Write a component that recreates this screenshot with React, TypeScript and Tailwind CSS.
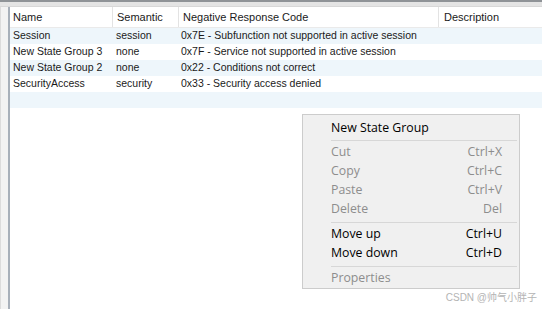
const rows = [
  { name: "Session", semantic: "session", code: "0x7E - Subfunction not supported in active session" },
  { name: "New State Group 3", semantic: "none", code: "0x7F - Service not supported in active session" },
  { name: "New State Group 2", semantic: "none", code: "0x22 - Conditions not correct" },
  { name: "SecurityAccess", semantic: "security", code: "0x33 - Security access denied" },
  { name: "", semantic: "", code: "" },
];

type MenuItem = { label: string; shortcut?: string; disabled?: boolean; sep?: boolean };

const menu: MenuItem[] = [
  { label: "New State Group" },
  { label: "", sep: true },
  { label: "Cut", shortcut: "Ctrl+X", disabled: true },
  { label: "Copy", shortcut: "Ctrl+C", disabled: true },
  { label: "Paste", shortcut: "Ctrl+V", disabled: true },
  { label: "Delete", shortcut: "Del", disabled: true },
  { label: "", sep: true },
  { label: "Move up", shortcut: "Ctrl+U" },
  { label: "Move down", shortcut: "Ctrl+D" },
  { label: "", sep: true },
  { label: "Properties", disabled: true },
];

const App = () => {
  return (
    <div className="relative w-[542px] h-[309px] overflow-hidden bg-white flex flex-col font-['Liberation_Sans',Arial,sans-serif] text-[10.5px] text-[#1a1a1a]">
      <div className="h-[2px] bg-[#8f9397]" />
      <div className="h-[5px] bg-[#e4e4e4] border-b border-[#d8d8d8]" />
      <div className="flex flex-1">
        <div className="w-[8px] bg-[#f3f3f3] border-l border-[#dcdcdc]" />
        <div className="flex-1 border-l-2 border-[#a8b0ba] flex flex-col">
          <div className="flex h-[21px] items-center border-b border-[#eaeaea] text-[11px]">
            <div className="w-[102px] pl-[3px]">Name</div>
            <div className="w-[66px] h-full flex items-center pl-[4px] border-l border-[#e3e3e3]">Semantic</div>
            <div className="w-[260px] h-full flex items-center pl-[4px] border-l border-[#e3e3e3]">Negative Response Code</div>
            <div className="flex-1 h-full flex items-center pl-[5px] border-l border-[#e3e3e3]">Description</div>
          </div>
          {rows.map((r, i) => (
            <div
              key={i}
              className={`flex h-[16px] items-center ${i % 2 === 0 ? "bg-[#eef6fb]" : "bg-white"}`}
            >
              <div className="w-[103px] pl-[3px]">{r.name}</div>
              <div className="w-[66px] pl-[3px]">{r.semantic}</div>
              <div className="flex-1 pl-[2px]">{r.code}</div>
            </div>
          ))}
        </div>
      </div>

      <div className="absolute left-[302px] top-[114px] w-[218px] h-[175px] bg-[#f0f0f0] border border-[#cccccc] pt-[4px] font-['Open_Sans','Noto_Sans',sans-serif] text-[12.3px]">
        {menu.map((m, i) =>
          m.sep ? (
            <div
              key={i}
              className={`ml-[28px] mr-[2px] h-px bg-[#d7d7d7] ${i === 1 ? "my-[2px]" : "mt-[3px] mb-[2px]"}`}
            />
          ) : (
            <div
              key={i}
              className={`flex h-[19px] items-center pl-[28px] pr-[17px] ${m.disabled ? "text-[#8d8d8d]" : "text-black"}`}
            >
              <span className="flex-1">{m.label}</span>
              {m.shortcut && <span>{m.shortcut}</span>}
            </div>
          )
        )}
      </div>

      <div className="absolute right-[5px] bottom-[4px] text-[10px] text-[#b4b4b4] font-['Liberation_Sans','Noto_Sans_CJK_SC',sans-serif]">
        CSDN @帅气小胖子
      </div>
    </div>
  );
};

export default App;
